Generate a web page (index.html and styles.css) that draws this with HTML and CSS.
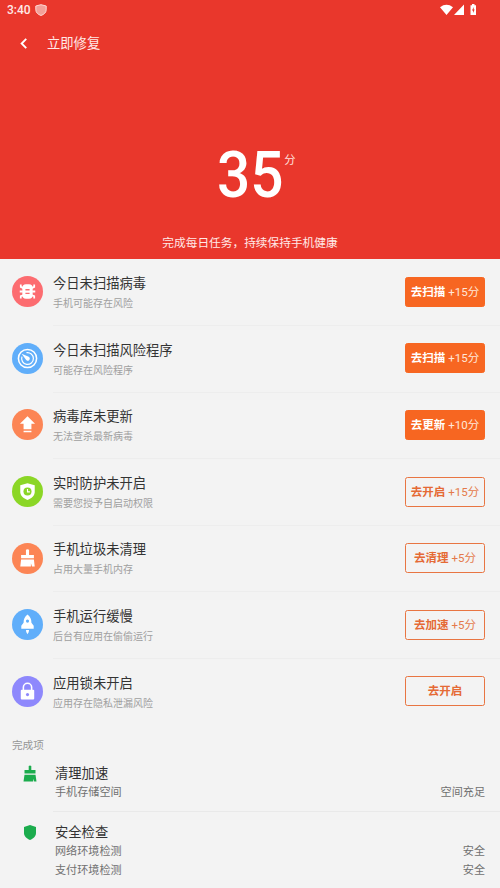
FILE: index.html
```html
<!DOCTYPE html>
<html lang="zh-CN">
<head>
<meta charset="utf-8">
<title>立即修复</title>
<link rel="stylesheet" href="styles.css">
</head>
<body>
<header class="hero">
  <div class="status">
    <span class="time">3:40</span>
    <svg class="guard" viewBox="0 0 12 12"><path d="M6 .7 11.2 2v3.8C11.2 8.500 9 10.500 6 11.500 3 10.500.8 8.500.8 5.800V2Z" fill="#f3a099" stroke="#ffd8d4" stroke-width="1"/></svg>
    <svg class="signals" viewBox="0 0 40 12"><path d="M0 3.200Q6.500-1.600 13 3.200L6.500 11Z M24 .6V11H14Z M30.500 1.200h1.500V0h2.500v1.200h1.500V11h-5.500Z" fill="#fff"/><path d="M33.700 3 32 6.500h1v2.500l1.700-3.500h-1Z" fill="#e9372c"/></svg>
  </div>
  <nav class="bar">
    <svg class="back" viewBox="0 0 8 10"><path d="M6.500.8 2.300 5l4.200 4.200" fill="none" stroke="#fff" stroke-width="1.700"/></svg>
    <h1>立即修复</h1>
  </nav>
  <div class="score"><span class="num">35</span><span class="unit">分</span></div>
  <p class="tip">完成每日任务，持续保持手机健康</p>
</header>
<main>
  <section class="row">
    <svg class="icon" viewBox="0 0 30 30"><circle cx="15" cy="15" r="15" fill="#fc6c70"/><path d="M8.500 8.300v2.200l3 1.500M21.500 8.300v2.200l-3 1.500M7.500 15h3M22.500 15h-3M8.500 21.700v-2.200l3-1M21.500 21.700v-2.200l-3-1" fill="none" stroke="#fff" stroke-width="1.700"/><rect x="10" y="8" width="10" height="14" rx="3.500" fill="#fff"/><path d="M13 13.300h4M13 16.800h4" stroke="#fc6c70" stroke-width="1.400"/></svg>
    <div class="text"><h2>今日未扫描病毒</h2><p>手机可能存在风险</p></div>
    <button class="btn solid"><b>去扫描</b> +15分</button>
  </section>
  <section class="row">
    <svg class="icon" viewBox="0 0 30 30"><circle cx="15" cy="15" r="15" fill="#60aefa"/><circle cx="15" cy="15" r="8.800" fill="none" stroke="#fff" stroke-width="1.500"/><path d="M14 9.400a5.700 5.700 0 1 1-4.400 3.800" fill="none" stroke="#fff" stroke-width="1.200"/><path d="M9.300 10.300 16.200 13.200a2.100 2.100 0 1 1-3 2.600Z" fill="#fff"/></svg>
    <div class="text"><h2>今日未扫描风险程序</h2><p>可能存在风险程序</p></div>
    <button class="btn solid"><b>去扫描</b> +15分</button>
  </section>
  <section class="row">
    <svg class="icon" viewBox="0 0 30 30"><circle cx="15" cy="15" r="15" fill="#fc8555"/><path d="M15 7l7.300 7.200h-3.500v5.300h-7.600v-5.300H7.700ZM11.200 21h7.600v1.500h-7.600Z" fill="#fff"/></svg>
    <div class="text"><h2>病毒库未更新</h2><p>无法查杀最新病毒</p></div>
    <button class="btn solid"><b>去更新</b> +10分</button>
  </section>
  <section class="row">
    <svg class="icon" viewBox="0 0 30 30"><circle cx="15" cy="15" r="15" fill="#8bd626"/><path d="M15 7l7 2v6.500c0 3.500-3 6-7 7.800-4-1.800-7-4.300-7-7.800V9Z" fill="#fff"/><circle cx="15" cy="15" r="3.900" fill="#8bd626"/><path d="M15 12.500V15.300h2.300" fill="none" stroke="#fff" stroke-width="1.100"/></svg>
    <div class="text"><h2>实时防护未开启</h2><p>需要您授予自启动权限</p></div>
    <button class="btn"><b>去开启</b> +15分</button>
  </section>
  <section class="row">
    <svg class="icon" viewBox="0 0 30 30"><circle cx="15" cy="15" r="15" fill="#fc8555"/><path d="M13.500 6.500q1.500-1 3 0v5h4.700v3.300H8.800v-3.300h4.700ZM8.800 16h12.400l.8 6.700h-2.600l-1.100-3v3H8Z" fill="#fff"/></svg>
    <div class="text"><h2>手机垃圾未清理</h2><p>占用大量手机内存</p></div>
    <button class="btn"><b>去清理</b> +5分</button>
  </section>
  <section class="row">
    <svg class="icon" viewBox="0 0 30 30"><circle cx="15" cy="15" r="15" fill="#60aefa"/><path d="M15 5.300c2.800 2.200 3.800 4.500 3.800 8l2.200 3v2.700h-12v-2.700l2.200-3c0-3.500 1-5.800 3.800-8Z" fill="#fff"/><circle cx="15" cy="11.700" r="1.500" fill="#60aefa"/><path d="M13.500 20.300h3q0 2.500-1.500 4.200-1.500-1.700-1.500-4.200Z" fill="#fff"/></svg>
    <div class="text"><h2>手机运行缓慢</h2><p>后台有应用在偷偷运行</p></div>
    <button class="btn"><b>去加速</b> +5分</button>
  </section>
  <section class="row">
    <svg class="icon" viewBox="0 0 30 30"><circle cx="15" cy="15" r="15" fill="#8e88fc"/><path d="M11 14v-3a4 4 0 0 1 8 0v3" fill="none" stroke="#fff" stroke-width="1.500"/><rect x="8.500" y="13.300" width="13" height="9.500" rx="1" fill="#fff"/><circle cx="15" cy="18" r="1.500" fill="#8e88fc"/></svg>
    <div class="text"><h2>应用锁未开启</h2><p>应用存在隐私泄漏风险</p></div>
    <button class="btn"><b>去开启</b></button>
  </section>
  <h3 class="label">完成项</h3>
  <section class="done">
    <svg class="mark" viewBox="0 0 14 16"><path d="M5.700.5q1.300-1 2.600 0v4h4.200V8h-11V4.500h4.200ZM1.500 9.200h11l1 6.800h-2.300l-1-2.700V16H.5Z" fill="#1bac4d"/></svg>
    <div class="items"><h2>清理加速</h2><p><span>手机存储空间</span><span>空间充足</span></p></div>
  </section>
  <section class="done second">
    <svg class="mark" viewBox="0 0 14 16"><path d="M7 .4l6 2v6c0 3.300-2.700 5.600-6 7.200-3.300-1.600-6-3.900-6-7.200v-6Z" fill="#1bac4d"/></svg>
    <div class="items"><h2>安全检查</h2><p><span>网络环境检测</span><span>安全</span></p><p><span>支付环境检测</span><span>安全</span></p></div>
  </section>
</main>
</body>
</html>
```

FILE: styles.css
```css
* { box-sizing: border-box; margin: 0; padding: 0; }
body {
  width: 500px;
  height: 888px;
  overflow: hidden;
  background: #f3f3f3;
  font-family: Roboto, "Noto Sans CJK SC", sans-serif;
  color: #333;
}
h1, h2, h3 { font-weight: 400; }
.hero { height: 258.5px; background: #e9372c; color: #fff; display: flex; flex-direction: column; }
.status { height: 20px; padding: 0 23px 0 7px; display: flex; align-items: center; }
.time { font-size: 12px; font-weight: 500; line-height: 20px; color: #ffe9e7; }
.guard { width: 12px; height: 12px; margin-left: 4px; }
.signals { width: 40px; height: 12px; margin-left: auto; margin-right: -3px; }
.bar { height: 47px; padding-left: 19px; display: flex; align-items: center; }
.back { width: 9px; height: 11px; }
.bar h1 { margin-left: 19px; font-size: 13.3px; line-height: 20px; color: #ffe9e7; }
.score { height: 70px; margin-top: 73px; margin-bottom: 23px; display: flex; justify-content: center; }
.num { width: 66px; font-size: 65px; line-height: 70px; font-weight: 500; margin-left: 13px; transform: scaleX(.9); transform-origin: left; }
.unit { width: 12px; font-size: 11.3px; line-height: 16px; margin-top: 13px; margin-left: 1.500px; color: #ffe0dd; }
.tip { text-align: center; font-size: 11.7px; line-height: 20px; color: #ffe9e7; }
.row { height: 66.6px; padding: 0 15px 0 12px; display: flex; align-items: center; }
.row + .row { background: linear-gradient(#ededed, #ededed) 53px 0 / 447px 1px no-repeat; }
.icon { width: 31px; height: 31px; flex: none; }
.text { flex: 1; align-self: stretch; margin-left: 10px; padding-top: 14.500px; }
.text h2 { font-size: 13.3px; line-height: 21px; }
.text p { font-size: 10px; line-height: 16px; margin-top: 2px; color: #a0a0a0; }
.btn {
  width: 80px;
  height: 30px;
  border: 1px solid #e87542;
  border-radius: 2.500px;
  background: transparent;
  color: #e47a4b;
  font: 400 11.5px/28px Roboto, "Noto Sans CJK SC", sans-serif;
  text-align: center;
  white-space: nowrap;
  padding-top: 1px;
  line-height: 27px;
}
.btn b { font-weight: 700; color: #e56a35; }
.solid { background: #f76621; border-color: #f76621; color: #ffe6d8; }
.solid b { color: #fff; }
.label { margin-top: 12px; padding-left: 12px; font-size: 10.6px; line-height: 18px; color: #969696; }
.done { display: flex; padding: 0 15px 0 23px; height: 48px; margin-top: 8.500px; }
.mark { width: 14px; height: 17px; margin-top: 1.500px; flex: none; }
.items { flex: 1; margin-left: 18px; }
.items h2 { font-size: 13.3px; line-height: 20px; margin-top: .5px; }
.items p { display: flex; justify-content: space-between; font-size: 11.1px; line-height: 19px; margin-top: -1px; color: #707070; }
.items p + p { margin-top: 0; }
.second { height: auto; margin-top: 0; padding-top: 11px; background: linear-gradient(#e9e9e9, #e9e9e9) 53px 0 / 447px 1px no-repeat; }
```
